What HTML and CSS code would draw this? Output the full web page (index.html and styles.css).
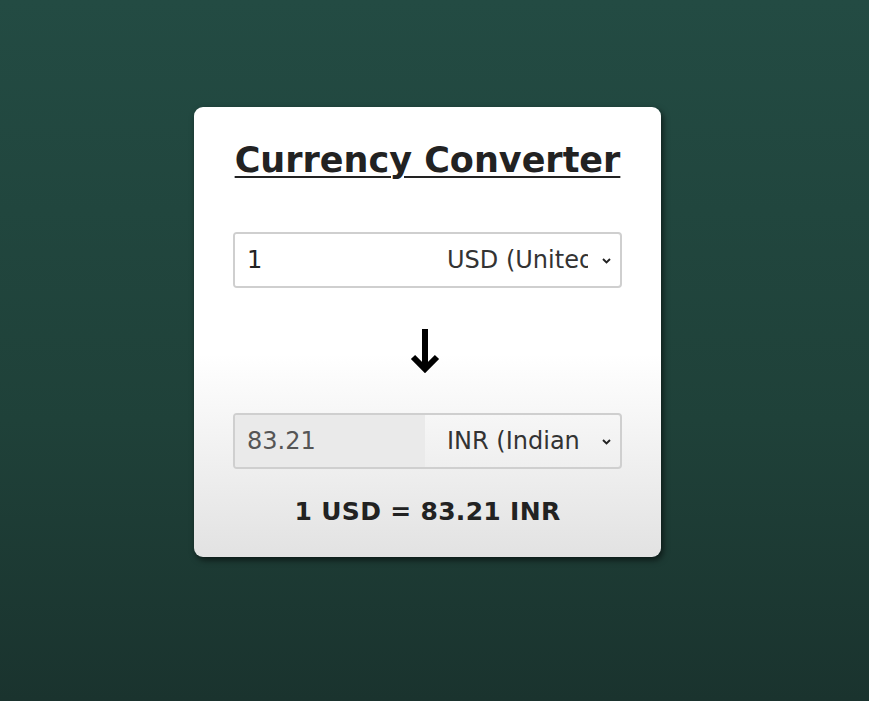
FILE: index.html
```html
<!DOCTYPE html>
<html lang="en">
<head>
<meta charset="utf-8">
<title>Currency Converter</title>
<link rel="stylesheet" href="styles.css">
</head>
<body>
<main class="card">
  <h1 class="title">Currency Converter</h1>
  <div class="field">
    <input class="amount" type="text" value="1">
    <div class="select-wrap">
      <select class="currency">
        <option>USD (United States Dollar)</option>
      </select>
      <svg class="chev" width="9" height="6" viewBox="0 0 9 6"><path d="M1 1l3.5 3.5L8 1" fill="none" stroke="#222" stroke-width="1.9"/></svg>
    </div>
  </div>
  <div class="arrow">
    <svg width="30" height="44" viewBox="0 0 30 44"><path d="M15 0v39" stroke="#000" stroke-width="6" fill="none"/><path d="M3 28l12 12 12-12" stroke="#000" stroke-width="6" fill="none"/></svg>
  </div>
  <div class="field">
    <input class="amount out" type="text" value="83.21" disabled>
    <div class="select-wrap">
      <select class="currency">
        <option>INR (Indian Rupee)</option>
      </select>
      <svg class="chev" width="9" height="6" viewBox="0 0 9 6"><path d="M1 1l3.5 3.5L8 1" fill="none" stroke="#222" stroke-width="1.9"/></svg>
    </div>
  </div>
  <p class="result">1 USD = 83.21 INR</p>
</main>
</body>
</html>
```
FILE: styles.css
```css
* { box-sizing: border-box; }
html, body { height: 100%; }
body {
  margin: 0;
  background: linear-gradient(to bottom, #234b43 0%, #1f4139 60%, #1a332e 100%);
  font-family: "DejaVu Sans", Verdana, sans-serif;
  display: flex;
  justify-content: flex-start;
  align-items: flex-start;
}
.card {
  margin: 107px 0 0 194px;
  width: 467px;
  height: 450px;
  background: linear-gradient(to bottom, #ffffff 0%, #ffffff 55%, #e2e2e2 100%);
  border-radius: 9px;
  padding: 33px 39px 0;
  box-shadow: 2px 3px 6px rgba(0, 0, 0, 0.6);
}
.title {
  margin: 0;
  text-align: center;
  font-size: 35px;
  line-height: 40px;
  font-weight: bold;
  color: #222;
  text-decoration: underline;
  text-decoration-thickness: 2px;
  text-underline-offset: 4px;
}
.field {
  margin-top: 52px;
  height: 56px;
  display: flex;
  border: 2px solid #cfcfcf;
  border-radius: 4px;
  overflow: hidden;
}
.amount {
  width: 190px;
  border: none;
  outline: none;
  padding: 0 0 0 12px;
  font-family: "DejaVu Sans", Verdana, sans-serif;
  font-size: 24px;
  color: #222;
  background: #fff;
}
.amount.out {
  background: #eaeaea;
  color: #555;
}
.select-wrap {
  position: relative;
  flex: 1;
  display: flex;
}
.currency {
  appearance: none;
  -webkit-appearance: none;
  width: 100%;
  border: none;
  outline: none;
  background: transparent;
  padding: 0 32px 0 22px;
  font-family: "DejaVu Sans", Verdana, sans-serif;
  font-size: 24px;
  color: #333;
}
.chev {
  position: absolute;
  right: 9px;
  top: 24px;
  pointer-events: none;
}
.arrow {
  height: 125px;
  display: flex;
  justify-content: center;
  align-items: center;
  padding-right: 5px;
}
.arrow + .field { margin-top: 0; }
.result {
  margin: 28px 0 0;
  text-align: center;
  font-size: 25px;
  line-height: 30px;
  font-weight: bold;
  letter-spacing: 0.3px;
  color: #222;
}
```
